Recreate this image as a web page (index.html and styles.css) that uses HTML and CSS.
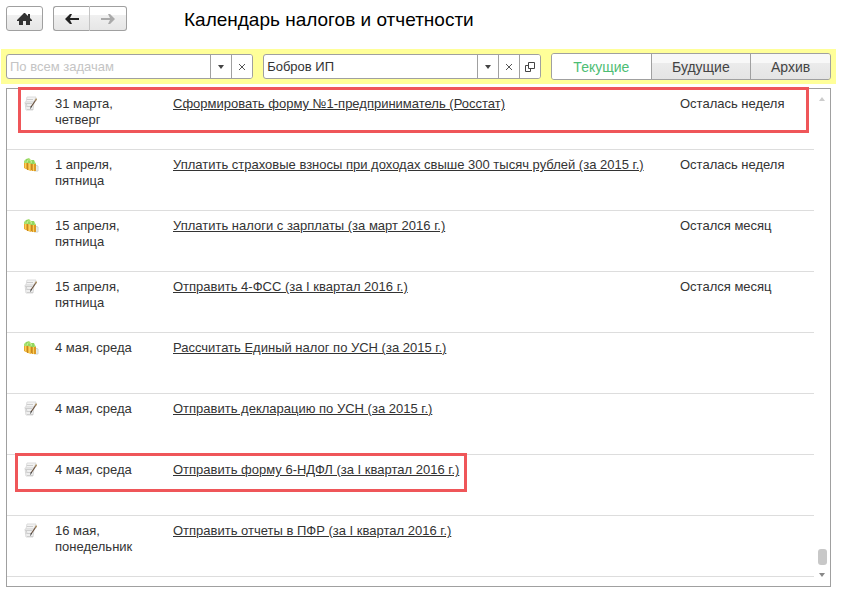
FILE: index.html
```html
<!DOCTYPE html>
<html lang="ru">
<head>
    <meta charset="UTF-8">
    <meta name="viewport" content="width=device-width, initial-scale=1.0">
    <title>Календарь налогов и отчетности</title>
    <link rel="stylesheet" href="styles.css">
</head>
<body>
    <svg class="sprite" width="0" height="0" aria-hidden="true">
        <symbol id="report" viewBox="0 0 16 16">
            <path d="M4 1h9l-2 5H3z" fill="#f3f3f3" stroke="#dcdcdc"/>
            <path d="M2 6h9l-1 8H3z" fill="#efefef" stroke="#dadada"/>
            <path d="M4 3.500h6M3 7.500h6M4 10.500h4M4 13.500h6" stroke="#cdcdcd" fill="none"/>
            <path d="M2 7l2 2-1 2" stroke="#cfcfcf" fill="none"/>
            <path d="M13.500 3L8 11" stroke="#6b5340" stroke-width="1.200"/>
            <path d="M8.500 10l-1 2.500" stroke="#444"/>
            <path d="M12.500 4.500l1-2" stroke="#b79b6b" stroke-width="1.200"/>
        </symbol>
        <symbol id="money" viewBox="0 0 16 16">
            <path d="M12 8l3 1v5h-4z" fill="#e9eeeb" stroke="#d0d6d2"/>
            <path d="M1 5l4 1v7l-4-2z" fill="#e9a92c"/>
            <path d="M5 5l3 1v8l-3-1z" fill="#f0b53a"/>
            <path d="M8 6h4l1 1v7H9l-1-1z" fill="#dc9925"/>
            <path d="M2.500 6v5M6.500 6v7M10.500 7v7" stroke="#f8cf5c"/>
            <path d="M4.500 6v7M8.500 7v6" stroke="#c58a22"/>
            <path d="M1 4l2-2 3-1 2 2h3l2 4H9L5 6 1 6z" fill="#a6e070"/>
            <path d="M3 3h2M5 5h2M9 4h2M8 6h3" stroke="#7ccf52"/>
            <path d="M4 4h1M7 3h1M8 5h1" stroke="#e2f7b7"/>
        </symbol>
    </svg>

    <header class="header">
        <button class="btn" type="button" aria-label="Начальная страница">
            <svg width="15" height="12" viewBox="0 0 15 12"><path d="M7 0h1l3 3V1h2v4l2 2v1h-2v4H9V8H6v4H2V8H0V7z" fill="#333"/></svg>
        </button>
        <div class="history">
            <button class="btn" type="button" aria-label="Назад">
                <svg width="14" height="12" viewBox="0 0 14 12"><path d="M0 6l5-5h2L5 5h9v2H5l2 4H5z" fill="#222"/></svg>
            </button>
            <button class="btn" type="button" aria-label="Вперед" disabled>
                <svg width="14" height="12" viewBox="0 0 14 12"><path d="M14 6L9 1H7l2 4H0v2h9l-2 4h2z" fill="#aaa"/></svg>
            </button>
        </div>
        <h1>Календарь налогов и отчетности</h1>
    </header>

    <div class="filters">
        <div class="field field-tasks">
            <input type="text" placeholder="По всем задачам" aria-label="Задачи">
            <button type="button" aria-label="Выбрать задачу"><svg width="6" height="4"><path d="M0 0h6L3 4z" fill="#444"/></svg></button>
            <button type="button" aria-label="Очистить задачу"><svg width="6" height="6"><path d="M0 0l6 6M6 0L0 6" stroke="#555"/></svg></button>
        </div>
        <div class="field field-company">
            <input type="text" value="Бобров ИП" aria-label="Организация">
            <button type="button" aria-label="Выбрать организацию"><svg width="6" height="4"><path d="M0 0h6L3 4z" fill="#444"/></svg></button>
            <button type="button" aria-label="Очистить организацию"><svg width="6" height="6"><path d="M0 0l6 6M6 0L0 6" stroke="#555"/></svg></button>
            <button type="button" aria-label="Открыть организацию"><svg width="10" height="10" viewBox="0 0 10 10"><path d="M3.500.5h6v6h-6zM3 3.500H.5v6h5V7" fill="none" stroke="#444"/></svg></button>
        </div>
        <div class="tabs">
            <button class="active" type="button">Текущие</button>
            <button type="button">Будущие</button>
            <button class="archive" type="button">Архив</button>
        </div>
    </div>

    <main class="list">
        <table class="tasks">
            <tr>
                <td class="icon"><span class="mark mark-wide"></span><svg><use href="#report"/></svg></td>
                <td class="date">31 марта, четверг</td>
                <td><a href="#">Сформировать форму №1-предприниматель (Росстат)</a></td>
                <td class="left">Осталась неделя</td>
            </tr>
            <tr>
                <td class="icon"><svg><use href="#money"/></svg></td>
                <td class="date">1 апреля, пятница</td>
                <td><a href="#">Уплатить страховые взносы при доходах свыше 300 тысяч рублей (за 2015 г.)</a></td>
                <td class="left">Осталась неделя</td>
            </tr>
            <tr>
                <td class="icon"><svg><use href="#money"/></svg></td>
                <td class="date">15 апреля, пятница</td>
                <td><a href="#">Уплатить налоги с зарплаты (за март 2016 г.)</a></td>
                <td class="left">Остался месяц</td>
            </tr>
            <tr>
                <td class="icon"><svg><use href="#report"/></svg></td>
                <td class="date">15 апреля, пятница</td>
                <td><a href="#">Отправить 4-ФСС (за I квартал 2016 г.)</a></td>
                <td class="left">Остался месяц</td>
            </tr>
            <tr>
                <td class="icon"><svg><use href="#money"/></svg></td>
                <td class="date">4 мая, среда</td>
                <td><a href="#">Рассчитать Единый налог по УСН (за 2015 г.)</a></td>
                <td class="left"></td>
            </tr>
            <tr>
                <td class="icon"><svg><use href="#report"/></svg></td>
                <td class="date">4 мая, среда</td>
                <td><a href="#">Отправить декларацию по УСН (за 2015 г.)</a></td>
                <td class="left"></td>
            </tr>
            <tr>
                <td class="icon"><span class="mark mark-short"></span><svg><use href="#report"/></svg></td>
                <td class="date">4 мая, среда</td>
                <td><a href="#">Отправить форму 6-НДФЛ (за I квартал 2016 г.)</a></td>
                <td class="left"></td>
            </tr>
            <tr>
                <td class="icon"><svg><use href="#report"/></svg></td>
                <td class="date">16 мая, понедельник</td>
                <td><a href="#">Отправить отчеты в ПФР (за I квартал 2016 г.)</a></td>
                <td class="left"></td>
            </tr>
        </table>
        <div class="scrollbar">
            <svg width="6" height="4"><path d="M0 4h6L3 0z" fill="#ccc"/></svg>
            <span class="thumb"></span>
            <svg width="6" height="4"><path d="M0 0h6L3 4z" fill="#888"/></svg>
        </div>
    </main>
</body>
</html>
```

FILE: styles.css
```css
* {
    margin: 0;
    padding: 0;
    box-sizing: border-box;
}
body {
    padding: 6px 7px 4px 1px;
    font-family: "Liberation Sans", Arial, sans-serif;
    font-size: 13px;
    line-height: 16px;
    color: #333;
    background-color: #fff;
}
button, input {
    font: inherit;
    color: inherit;
}
.sprite {
    position: absolute;
}
.header {
    display: flex;
    align-items: flex-start;
    padding-left: 5px;
    margin-bottom: 16px;
}
.header h1 {
    margin-left: 57px;
    font-size: 19px;
    line-height: 27px;
    font-weight: normal;
    color: #000;
}
.btn {
    display: flex;
    align-items: center;
    justify-content: center;
    width: 37px;
    height: 25px;
    border: 1px solid #a0a0a0;
    border-radius: 3px;
    background: linear-gradient(#fff 35%, #f0f0f0 35%, #e6e6e6);
}
.history {
    display: flex;
    margin-left: 10px;
}
.history .btn:first-child {
    border-right-color: #c4c4c4;
    border-radius: 3px 0 0 3px;
}
.history .btn:last-child {
    border-left: 0;
    border-radius: 0 3px 3px 0;
}
.filters {
    display: flex;
    gap: 10px;
    padding: 4px 5px;
    margin-bottom: 4px;
    background-color: #ffff99;
}
.field {
    display: flex;
    height: 25px;
    margin-top: 1px;
    border: 1px solid #a0a0a0;
    border-radius: 3px;
    background-color: #fff;
    overflow: hidden;
}
.field-tasks {
    flex: 247 1 0;
}
.field-company {
    flex: 278 1 0;
}
.field input {
    flex: 1;
    min-width: 0;
    padding-left: 3px;
    border: 0;
    outline: 0;
    background: none;
}
.field input::placeholder {
    color: #c4c4c4;
}
.field button {
    display: flex;
    align-items: center;
    justify-content: center;
    width: 21px;
    border: 0;
    border-left: 1px solid #a0a0a0;
    background-color: #fff;
}
.tabs {
    display: flex;
    flex: 280 1 0;
    height: 27px;
    border: 1px solid #a0a0a0;
    border-radius: 3px;
    overflow: hidden;
}
.tabs button {
    flex: 5 1 0;
    border: 0;
    border-left: 1px solid #a0a0a0;
    font-size: 14px;
    color: #444;
    background: linear-gradient(#f8f8f8 35%, #ebebeb 35%, #e4e4e4);
}
.tabs .archive {
    flex-grow: 4;
}
.tabs .active {
    border-left: 0;
    color: #4dbd74;
    background: #fff;
}
.list {
    display: flex;
    margin-left: 5px;
    margin-right: 5px;
    border: 1px solid #a0a0a0;
    padding-bottom: 9px;
}
.tasks {
    flex: 1;
    border-collapse: separate;
    border-spacing: 0;
    table-layout: fixed;
}
.tasks tr {
    position: relative;
}
.tasks td {
    height: 61px;
    padding-top: 7px;
    border-bottom: 1px solid #ddd;
    vertical-align: top;
}
.tasks .icon {
    width: 48px;
    padding-left: 16px;
}
.icon svg {
    display: block;
    width: 16px;
    height: 16px;
}
.tasks .date {
    width: 118px;
    padding-right: 36px;
}
.tasks .left {
    width: 134px;
}
.tasks a {
    color: #333;
}
.mark {
    position: absolute;
    border: 3px solid #ef5659;
    pointer-events: none;
}
.mark-wide {
    top: -2px;
    left: 11px;
    right: 5px;
    height: 46px;
}
.mark-short {
    top: -2px;
    left: 8px;
    width: 452px;
    height: 39px;
}
.scrollbar {
    display: flex;
    flex-direction: column;
    align-items: center;
    width: 16px;
    padding-top: 8px;
}
.thumb {
    width: 9px;
    height: 16px;
    margin-top: auto;
    margin-bottom: 8px;
    border-radius: 3px;
    background-color: #c8c8c8;
}
```
